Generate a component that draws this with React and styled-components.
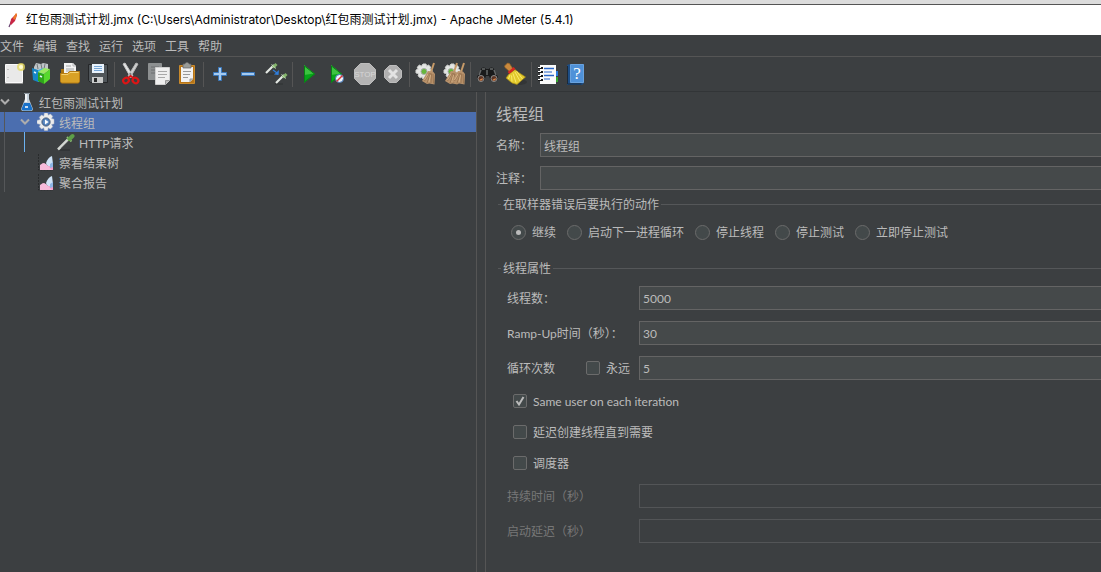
import React, { useState } from "react";
import styled, { createGlobalStyle, css } from "styled-components";

const GlobalStyle = createGlobalStyle`
  * {
    box-sizing: border-box;
  }
  body {
    margin: 0;
    background: #3c3f41;
    color: #bbbbbb;
    overflow: hidden;
  }
  body, button, input {
    font-family: Lato, "Noto Sans CJK SC", sans-serif;
    font-size: 12px;
  }
`;

const Window = styled.div`
  display: flex;
  flex-direction: column;
  min-height: 100vh;
`;

const TitleBar = styled.header`
  display: flex;
  align-items: center;
  gap: 5px;
  height: 35px;
  padding-left: 5px;
  border-top: 4px solid #dcdcdc;
  background: #ffffff;
  box-shadow: inset 0 1px 0 #555555;
  color: #000000;
`;

const Title = styled.h1`
  margin: 0;
  font-family: Inter, "Noto Sans CJK SC", sans-serif;
  font-size: 12px;
  font-weight: 400;
  line-height: 20px;
  white-space: nowrap;
`;

const MenuBar = styled.nav`
  display: flex;
  gap: 9px;
  height: 22px;
  border-bottom: 1px solid #555555;
`;

const MenuItem = styled.button`
  padding: 2px 0 0;
  border: 0;
  background: none;
  color: inherit;
  line-height: 18px;
`;

const Toolbar = styled.div`
  display: flex;
  align-items: center;
  height: 35px;
  border-bottom: 1px solid #323537;
`;

const ToolButton = styled.button`
  width: 28px;
  height: 28px;
  padding: 0;
  border: 0;
  background: none;

  svg {
    display: block;
  }
`;

const Separator = styled.div`
  width: 1px;
  height: 25px;
  margin: 0 2px;
  background: #555555;
`;

const Body = styled.div`
  display: flex;
  flex: 1;
`;

const Tree = styled.ul`
  flex: 0 0 476px;
  margin: 0;
  padding: 0;
  list-style: none;
`;

const TreeRow = styled.li`
  display: flex;
  align-items: center;
  height: 20px;
  ${({ $selected }) => $selected && css`
    background: #4b6eaf;
  `}
`;

const NodeLabel = styled.span`
  padding-top: 3px;
  line-height: 17px;
`;

const Guide = styled.span`
  width: 16px;
  height: 20px;
  margin-left: 4px;
  border-left: 1px solid ${({ $active }) => ($active ? "#6cb2f0" : "#555759")};
`;

const Chevron = styled.span`
  width: 17px;
  height: 20px;
`;

const TreeIcon = styled.span`
  width: 18px;
  height: 18px;
  margin-right: 4px;

  svg {
    display: block;
  }
`;

const Splitter = styled.div`
  flex: 0 0 10px;
  border: solid #555555;
  border-width: 0 1px;
`;

const Panel = styled.main`
  flex: 1;
  min-width: 0;
  padding: 10px 0 0 10px;
`;

const PanelTitle = styled.h2`
  margin: 0 0 7px;
  font-size: 16px;
  font-weight: 400;
  line-height: 24px;
`;

const NameRow = styled.div`
  display: flex;
  align-items: center;
  gap: 8px;
  margin-bottom: 9px;
`;

const LabelText = styled.span`
  display: block;
  padding-top: 2px;
  line-height: 18px;
`;

const TextInput = styled.input`
  flex: 1;
  min-width: 0;
  height: 24px;
  padding: 1px 3px 0;
  border: 1px solid #646464;
  border-right: 0;
  border-radius: 0;
  background: #45494a;
  color: #bbbbbb;
  outline: none;

  &:disabled {
    border-color: #535557;
    background: #3c3f41;
  }
`;

const Group = styled.fieldset`
  min-width: 0;
  margin: ${({ $top }) => $top}px 0 0 2px;
  padding: 10px 0 0;
  border: 0;
  border-top: 1px solid #555759;
`;

const Legend = styled.legend`
  margin-left: 3px;
  padding: 2px 2px 0;
  line-height: 14px;
`;

const RadioRow = styled.div`
  display: flex;
  gap: 11px;
  padding-left: 13px;
`;

const Choice = styled.label`
  display: flex;
  align-items: center;
  gap: 6px;
`;

const Radio = styled.input`
  display: grid;
  place-content: center;
  width: 15px;
  height: 15px;
  margin: 0;
  appearance: none;
  border: 1px solid #6b6b6b;
  border-radius: 50%;
  background: #43494a;

  &:checked::after {
    content: "";
    width: 5px;
    height: 5px;
    border-radius: 50%;
    background: #bbbbbb;
  }
`;

const Box = styled.span`
  display: grid;
  width: 14px;
  height: 14px;

  > * {
    grid-area: 1 / 1;
  }

  svg {
    pointer-events: none;
  }
`;

const BoxInput = styled.input`
  width: 14px;
  height: 14px;
  margin: 0;
  appearance: none;
  border: 1px solid #6b6b6b;
  border-radius: 2px;
  background: #43494a;
`;

const Fields = styled.div`
  display: grid;
  gap: 11px;
`;

const Field = styled.div`
  display: flex;
  align-items: center;
  padding-left: 9px;
  color: ${({ $disabled }) => ($disabled ? "#777777" : "inherit")};
`;

const FieldLabel = styled.div`
  display: flex;
  justify-content: space-between;
  width: 132px;
  padding-right: 9px;
  white-space: nowrap;
`;

const CheckRow = styled.div`
  display: flex;
  padding-left: 15px;
`;

function Icon({ children, size = 28 }) {
  return (
    <svg width={size} height={size} viewBox={`0 0 ${size} ${size}`} fill="none" aria-hidden="true">
      {children}
    </svg>
  );
}

const gear = "M11 4h3l.6 2.2 2-1.1 2.2 2.1-1 2 2.2.8v3l-2.2.6 1 2.1-2.1 2.1-2.1-1-.7 2.2h-3l-.7-2.2-2 1-2.2-2.1 1-2.1L4 13v-3l2.2-.8-1-2 2.1-2.1 2.1 1.1z";

function Bristles({ x = 0 }) {
  return (
    <g transform={`translate(${x} 0)`}>
      <path d="M21 3 18 12" stroke="#c69a68" strokeWidth="2" />
      <path d="m15 11 5 .5 2 2.500-.5 10.500-5-1-2.500.5-5-3z" fill="#b8926b" />
      <path d="m16.500 13-5 8m6-8L14 23m4.500-9.500L18 23m2-9 .5 9.500" stroke="#8a6542" strokeWidth=".6" />
      <path d="m15 14-3.500 6m6-5-1.500 7" stroke="#dab78c" strokeWidth=".8" />
    </g>
  );
}

const icons = {
  new: (
    <>
      <path d="M5.500 4.500h17v18h-17z" fill="#e9e9e9" stroke="#fafafa" />
      <path d="M5 23.500h18" stroke="#8b8b8b" />
      <path d="M8 9v1m0 7v1" stroke="#999" />
      <circle cx="21" cy="7" r="4" fill="#e6da60" opacity=".8" />
      <circle cx="21" cy="7" r="2" fill="#fffbd2" />
    </>
  ),
  templates: (
    <>
      <path d="m6 7 2-4 5 1 2-1 5 1v7l-9 3-5-2z" fill="#bfc5c8" />
      <path d="m9 4 1 5m3-5 1 5m3-5-1 5" stroke="#73797c" />
      <path d="m4 8 6 2v12l-5-2z" fill="#1687c7" />
      <path d="m10 10 6-2v11l-6 3z" fill="#36b2ea" />
      <path d="m10 12 6 2v10l-6-3z" fill="#2fa51b" />
      <path d="m16 14 6-5v10l-6 5z" fill="#57d92d" />
      <path d="m10 12 6-4 6 1-6 5z" fill="#9bea62" />
      <path d="m6 12 2 1m4 3 2 1" stroke="#e2f4ff" strokeWidth="1.500" />
    </>
  ),
  open: (
    <>
      <path d="M5 9h5l2 3h11v10H5z" fill="#a87210" />
      <path d="M8 3h9l3 3v9H8z" fill="#f3f3f3" />
      <path d="M10 6h5m-5 3h8m-8 2h8" stroke="#a3a6a8" />
      <path d="M17 3v3h3" stroke="#b3b5b7" />
      <path d="M4.500 13.500h7l2-2h10v10l-1 1.500h-17l-1-1.500z" fill="#d9a126" stroke="#b77c13" />
      <path d="M5.500 14.500h6.500l2-2h8.500" stroke="#f5d06e" />
    </>
  ),
  save: (
    <>
      <path d="M4.500 4.500h19v18h-17l-2-2z" fill="#50565a" stroke="#252729" />
      <path d="M8 4h12v9H8z" fill="#e8f2fb" />
      <path d="M10 6.500h8m-8 2h8m-8 2h8" stroke="#77a6d5" />
      <path d="M8 17h11v6H8z" fill="#c9cbcb" />
      <path d="M10 18h3v4h-3z" fill="#292b2c" />
    </>
  ),
  cut: (
    <>
      <path d="m6 4 2-1 8 13-2 2z" fill="#e4e6e6" stroke="#c4c4c4" />
      <path d="m21 4-2-1-8 13 2 2z" fill="#cfd1d1" stroke="#b4b4b4" />
      <circle cx="13.500" cy="14" r="1" fill="#777" />
      <ellipse cx="9" cy="20.500" rx="3" ry="2.500" transform="rotate(-35 9 20.500)" stroke="#dc1515" strokeWidth="2.200" />
      <ellipse cx="18.500" cy="20.500" rx="3" ry="2.500" transform="rotate(35 18.500 20.500)" stroke="#dc1515" strokeWidth="2.200" />
      <path d="m11 18 2.500-2 3 2" stroke="#dc1515" strokeWidth="2" />
    </>
  ),
  copy: (
    <>
      <path d="M3.500 3.500h13v16h-13z" fill="#8d9091" stroke="#8d9091" />
      <path d="M6 7h8m-8 3h4m-4 3h4" stroke="#6c6f71" />
      <path d="M10.500 7.500h14v13l-4 4h-10z" fill="#efefef" stroke="#cfcfcf" />
      <path d="M13 11.500h9m-9 3h9m-9 3h7" stroke="#a9a9a9" />
      <path d="M20.500 24.500v-4h4" fill="#bcbcbc" stroke="#999" />
    </>
  ),
  paste: (
    <>
      <path d="M6.500 5.500h15v18h-15z" fill="#b87516" stroke="#c98a2c" />
      <path d="M8 7h12v12l-3 3H8z" fill="#f2f2f2" />
      <path d="M17 22v-3h3" fill="#bebebe" stroke="#999" />
      <path d="M10 4h2c0-2 4-2 4 0h2v4h-8z" fill="#9a9c98" stroke="#666" strokeWidth=".7" />
      <path d="M10 11.500h8m-8 3h7m-7 3h5" stroke="#999" />
    </>
  ),
  plus: <path d="M12.500 7.500h3v5h5v3h-5v5h-3v-5h-5v-3h5z" fill="#a5caef" stroke="#3977bb" />,
  minus: <path d="M7.500 12.500h13v3h-13z" fill="#a5caef" stroke="#3977bb" />,
  toggle: (
    <>
      <path d="M4 14h8m1 10h8" stroke="#262829" opacity=".6" />
      <path d="m4 13 8-8" stroke="#e4e8e4" strokeWidth="2.200" />
      <path d="m11 7.500 3.500-3.500" stroke="#83b56b" strokeWidth="3" />
      <path d="m9.500 4.500 4.500 4" stroke="#c3e0b4" />
      <path d="m14 23 8-8" stroke="#e4e8e4" strokeWidth="2.200" />
      <path d="m21 17.500 3.500-3.500" stroke="#83b56b" strokeWidth="3" />
      <path d="m19.500 14.500 4.500 4" stroke="#c3e0b4" />
      <path d="m11 10 4 3" stroke="#2e7ddb" strokeWidth="1.200" />
      <path d="m17 10-.5 5-4.500-.5z" fill="#2e7ddb" />
    </>
  ),
  play: (
    <>
      <path d="M9 5v18l11-9z" fill="#08a51a" />
      <path d="M9 5v10l10-1.500z" fill="#3cc340" />
      <path d="M9.500 6v16l10-8z" stroke="#078313" />
    </>
  ),
  playNoTimers: (
    <>
      <path d="M8 5v18l11-9z" fill="#08a51a" />
      <path d="M8 5v10l10-1.500z" fill="#3cc340" />
      <path d="M8.500 6v16l10-8z" stroke="#078313" />
      <circle cx="16.500" cy="18.500" r="4" fill="#eef3fa" stroke="#3e73b5" />
      <path d="m13.500 21.500 6-6" stroke="#d93434" strokeWidth="1.500" />
    </>
  ),
  stop: (
    <>
      <path d="M9.500 3.500h9l6 6v9l-6 6h-9l-6-6v-9z" fill="#b4b4b4" stroke="#bdbdbd" />
      <text x="14" y="17" textAnchor="middle" fontFamily="Liberation Sans" fontSize="8" fill="#d6d6d6">STOP</text>
    </>
  ),
  shutdown: (
    <>
      <path d="M10.500 5.500h7l5 5v7l-5 5h-7l-5-5v-7z" fill="#b0b0b0" stroke="#bcbcbc" />
      <path d="m10 10 8 8m0-8-8 8" stroke="#e3e3e3" strokeWidth="3" />
    </>
  ),
  clear: (
    <>
      <path d={gear} fill="#e4e6e4" stroke="#d2d4d2" />
      <circle cx="12" cy="11.500" r="3" fill="#66b73c" stroke="#a9aba9" />
      <Bristles x={1} />
    </>
  ),
  clearAll: (
    <>
      <path d={gear} fill="#e4e6e4" stroke="#d2d4d2" />
      <circle cx="11" cy="11.500" r="3" fill="#66b73c" stroke="#a9aba9" />
      <Bristles x={-4} />
      <Bristles x={3} />
    </>
  ),
  search: (
    <>
      <path d="M8 9c1-2 4-2 5 0h3c1-2 4-2 5 0l4 8-1 4h-6l-2-5h-3l-2 5H5l-1-4z" fill="#191a1b" />
      <path d="m8 10-2 5m15-5 2 5m-9-5v5M9 9h3m5 0h3" stroke="#66696a" strokeWidth="1.500" />
      <circle cx="8" cy="18.500" r="3" fill="#5b3424" stroke="#8c8d8d" />
      <circle cx="21" cy="18.500" r="3" fill="#5b3424" stroke="#8c8d8d" />
      <path d="M7 19.500c1 1 2 0 2.500-1m10.500 1c1 1 2 0 2.500-1" stroke="#e18b4d" strokeWidth="1.200" />
    </>
  ),
  broom: (
    <>
      <ellipse cx="18" cy="22" rx="8" ry="3" fill="#2a2b2b" opacity=".5" />
      <path d="m3.500 6 3-3 2 .5 3.500 5.500-3.500 2.500-4.500-4z" fill="#c9893d" stroke="#936126" strokeWidth=".7" />
      <path d="m8 14 6-4.500 3 2.500 7.500 5-8.500 7.500-5-1.500-6-5z" fill="#e2c92c" stroke="#a58a15" strokeWidth=".7" />
      <path d="m9 15-1.500 4m3-3.500.5 6m1-8 3 9m-1-10.500 5 9m-3.500-10 6 8" stroke="#fff27a" strokeWidth=".8" />
      <path d="m7.500 13 6-5" stroke="#d72720" strokeWidth="2.500" />
    </>
  ),
  log: (
    <>
      <path d="M22 11h2v5h-2z" fill="#2d7de0" />
      <path d="M22 17h2v5h-2z" fill="#37a631" />
      <path d="M6 5h16v19H6z" fill="#fbfbfb" />
      <path d="M4 8h5m-5 4h5m-5 4h5m-5 4h5" stroke="#171819" strokeWidth="2" />
      <path d="M4 7.500h3m-3 4h3m-3 4h3m-3 4h3" stroke="#fff" />
      <path d="M10 8.500h10m-10 7h10" stroke="#2a67c9" strokeWidth="1.500" />
      <path d="M10 12h8m-8 7h6" stroke="#2a67c9" />
    </>
  ),
  help: (
    <>
      <path d="m5 5 3-1h14v19l-2 2H5z" fill="#1d4e86" />
      <path d="M8.500 4.500h13v18h-13z" fill="#4f91d8" stroke="#6aa2dd" />
      <path d="M5.500 6v18h14" stroke="#1b2938" />
      <text x="15" y="19" textAnchor="middle" fontFamily="Liberation Serif" fontSize="17" fill="#ffffff">?</text>
    </>
  ),
};

const treeIcons = {
  plan: (
    <>
      <path d="M8 0h4v6l4 10-1 2H5l-1-2L8 6z" fill="#c4d0da" />
      <path d="m7 10-2.500 6 1 1.500h9l1-1.500-2.500-6z" fill="#1871c9" />
      <path d="M9 1v8m-1 5h3" stroke="#ffffff" strokeWidth="1.500" />
      <path d="M7 .5h6" stroke="#8b969e" />
    </>
  ),
  group: (
    <>
      <path d="M7.400 0h3.200l.6 2.300L13.400 1l2.300 2.300-1.200 2.200 2.500.7V9.800l0 1-2.500.7 1.200 2.200-2.300 2.300-2.200-1.200-.6 2.700H7.400l-.6-2.700L4.600 16l-2.300-2.300 1.200-2.200L0 10.600V7.400l3.500-.9-1.200-2.200L4.600 2l2.200 1.200z" fill="#ececec" stroke="#b9bfc8" strokeWidth=".5" />
      <circle cx="9" cy="9" r="4.300" fill="#365f94" stroke="#8592a5" />
      <circle cx="9" cy="9" r="3" fill="#5f8dc5" />
      <path d="M8 6.500v5l3.500-2.500z" fill="#ffffff" />
    </>
  ),
  sampler: (
    <>
      <path d="M1 17h12" stroke="#242627" opacity=".7" />
      <path d="m1 16.500 10-10" stroke="#d3d7d3" strokeWidth="2.500" />
      <path d="m4 15 7-7" stroke="#8a8c8a" strokeWidth=".8" />
      <path d="m10 4 4.500 4.500" stroke="#8abb73" strokeWidth="2" />
      <path d="m12.500 6 3-3" stroke="#5d9e47" strokeWidth="4" strokeLinecap="round" />
    </>
  ),
  report: (
    <>
      <path d="M1.500 1v16H16" stroke="#292b2c" strokeDasharray="2 1" />
      <path d="m3 15 4-5 4 3 5-4v8H3z" fill="#f19ac8" />
      <path d="M3 17v-5l3-2 3 1 6 6z" fill="#f6b9d9" />
      <path d="M9 10c1-3 3-6 6-7l1 8c-2 3-6 3-7-1z" fill="#d0e3f8" />
      <path d="m13 11 3-2v5l-3 1z" fill="#8eb5e5" />
    </>
  ),
};

const menus = ["文件", "编辑", "查找", "运行", "选项", "工具", "帮助"];

const toolGroups = [
  ["new", "templates", "open", "save"],
  ["cut", "copy", "paste"],
  ["plus", "minus", "toggle"],
  ["play", "playNoTimers", "stop", "shutdown"],
  ["clear", "clearAll"],
  ["search", "broom"],
  ["log", "help"],
];

const nodes = [
  { label: "红包雨测试计划", icon: "plan", guides: [], open: true },
  { label: "线程组", icon: "group", guides: [false], open: true, selected: true },
  { label: "HTTP请求", icon: "sampler", guides: [false, true] },
  { label: "察看结果树", icon: "report", guides: [false] },
  { label: "聚合报告", icon: "report", guides: [false] },
];

const errorActions = ["继续", "启动下一进程循环", "停止线程", "停止测试", "立即停止测试"];

function Checkbox({ label, defaultChecked = false }) {
  const [checked, setChecked] = useState(defaultChecked);

  return (
    <Choice>
      <Box>
        <BoxInput type="checkbox" checked={checked} onChange={() => setChecked(!checked)} />
        {checked && (
          <Icon size={14}>
            <path d="m3.500 7 2.500 3.500 4.500-7.500" stroke="#bbbbbb" strokeWidth="2" />
          </Icon>
        )}
      </Box>
      <LabelText>{label}</LabelText>
    </Choice>
  );
}

function InputField({ id, label, value, disabled, children }) {
  return (
    <Field $disabled={disabled}>
      <FieldLabel>
        <LabelText as="label" htmlFor={id}>{label}</LabelText>
        {children}
      </FieldLabel>
      <TextInput id={id} defaultValue={value} disabled={disabled} />
    </Field>
  );
}

function ThreadGroupPanel() {
  return (
    <Panel>
      <PanelTitle>线程组</PanelTitle>
      <NameRow>
        <LabelText as="label" htmlFor="name">名称：</LabelText>
        <TextInput id="name" defaultValue="线程组" />
      </NameRow>
      <NameRow>
        <LabelText as="label" htmlFor="comments">注释：</LabelText>
        <TextInput id="comments" />
      </NameRow>
      <Group $top={-3}>
        <Legend>在取样器错误后要执行的动作</Legend>
        <RadioRow>
          {errorActions.map((action, i) => (
            <Choice key={action}>
              <Radio type="radio" name="onError" defaultChecked={i === 0} />
              <LabelText>{action}</LabelText>
            </Choice>
          ))}
        </RadioRow>
      </Group>
      <Group $top={18}>
        <Legend>线程属性</Legend>
        <Fields>
          <InputField id="threads" label="线程数：" value="5000" />
          <InputField id="rampUp" label="Ramp-Up时间（秒）：" value="30" />
          <InputField id="loops" label="循环次数" value="5">
            <Checkbox label="永远" />
          </InputField>
          <CheckRow>
            <Checkbox label="Same user on each iteration" defaultChecked />
          </CheckRow>
          <CheckRow>
            <Checkbox label="延迟创建线程直到需要" />
          </CheckRow>
          <CheckRow>
            <Checkbox label="调度器" />
          </CheckRow>
          <InputField id="duration" label="持续时间（秒）" disabled />
          <InputField id="delay" label="启动延迟（秒）" disabled />
        </Fields>
      </Group>
    </Panel>
  );
}

export default function App() {
  return (
    <Window>
      <GlobalStyle />
      <TitleBar>
        <Icon size={16}>
          <path d="M4 15 7 8" stroke="#68406f" strokeWidth="1.200" />
          <path d="m5 12 1-5 5-5 1 1-2 6-4 4z" fill="#c92645" />
          <path d="m8 6 3-5 1 1-1 4-2 2z" fill="#ef7b27" />
        </Icon>
        <Title>红包雨测试计划.jmx (C:\Users\Administrator\Desktop\红包雨测试计划.jmx) - Apache JMeter (5.4.1)</Title>
      </TitleBar>
      <MenuBar>
        {menus.map((menu) => (
          <MenuItem key={menu}>{menu}</MenuItem>
        ))}
      </MenuBar>
      <Toolbar>
        {toolGroups.map((group, i) => (
          <React.Fragment key={i}>
            {i > 0 && <Separator />}
            {group.map((name) => (
              <ToolButton key={name} aria-label={name}>
                <Icon>{icons[name]}</Icon>
              </ToolButton>
            ))}
          </React.Fragment>
        ))}
      </Toolbar>
      <Body>
        <Tree>
          {nodes.map((node) => (
            <TreeRow key={node.label} $selected={node.selected}>
              {node.guides.map((active, i) => (
                <Guide key={i} $active={active} />
              ))}
              <Chevron>
                {node.open && (
                  <Icon size={17}>
                    <path d="m1 7.500 4 4 4-4" stroke="#adadad" strokeWidth="2" />
                  </Icon>
                )}
              </Chevron>
              <TreeIcon>
                <Icon size={18}>{treeIcons[node.icon]}</Icon>
              </TreeIcon>
              <NodeLabel>{node.label}</NodeLabel>
            </TreeRow>
          ))}
        </Tree>
        <Splitter />
        <ThreadGroupPanel />
      </Body>
    </Window>
  );
}
